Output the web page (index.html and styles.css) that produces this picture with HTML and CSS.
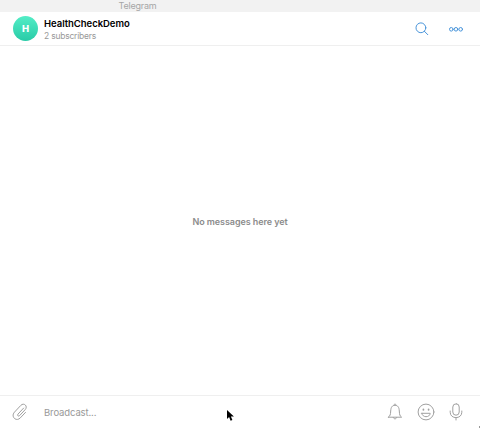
FILE: index.html
```html
<!DOCTYPE html>
<html lang="en">
<head>
<meta charset="utf-8">
<title>Telegram</title>
<link rel="stylesheet" href="styles.css">
</head>
<body>
<div class="window">
  <div class="titlebar"><span>Telegram</span></div>
  <header class="header">
    <div class="avatar">H</div>
    <div class="info">
      <div class="name">HealthCheckDemo</div>
      <div class="subs">2 subscribers</div>
    </div>
    <svg class="search" width="14" height="14" viewBox="0 0 14 14"><circle cx="5.9" cy="5.8" r="4.9"/><path d="M9.4 9.3l3.4 3.4"/></svg>
    <svg class="more" width="14" height="6" viewBox="0 0 14 6"><circle cx="2.3" cy="3.3" r="1.8"/><circle cx="7" cy="3.3" r="1.8"/><circle cx="11.7" cy="3.3" r="1.8"/></svg>
  </header>
  <main class="chat"><p>No messages here yet</p></main>
  <footer class="composer">
    <svg class="clip" width="16" height="18" viewBox="0 0 16 18"><path d="M11.6 5.1L5.9 11.2c-1 1.1.5 2.6 1.6 1.5l5.7-6.1c3-3.3-1.2-7.5-4.4-4.2L2.5 9.1c-4.1 4.5 1.7 10.1 5.8 5.8l5.2-5.5"/></svg>
    <div class="input">Broadcast...</div>
    <svg class="bell" width="16" height="18" viewBox="0 0 16 18"><path d="M1.4 14.2h13.2c-1.8-1.3-2.1-2.5-2.3-6.2C12.1 4.1 10.7 2.3 8 2.3S3.9 4.1 3.7 8c-.2 3.7-.5 4.9-2.3 6.2zM7 2.2c-.4-1.6 2.4-1.6 2 0M6.3 14.5c.3 1.9 3.1 1.9 3.4 0"/></svg>
    <svg class="smile" width="18" height="18" viewBox="0 0 18 18"><circle cx="9" cy="9" r="7.9"/><path d="M4.8 10.3h8.4c-.4 4.6-8 4.6-8.4 0z"/><ellipse class="eye" cx="6.4" cy="6.7" rx=".9" ry="1.1"/><ellipse class="eye" cx="11.6" cy="6.7" rx=".9" ry="1.1"/></svg>
    <svg class="mic" width="14" height="18" viewBox="0 0 14 18"><rect x="3.8" y=".8" width="6.4" height="11.4" rx="3.2"/><path d="M1.2 8v1.3c0 7.1 11.6 7.1 11.6 0V8M7 14.7V17"/></svg>
  </footer>
  <svg class="cursor" width="9" height="13" viewBox="0 0 9 13"><path d="M1 1v9l2.1-1.9 1.5 3.6 1.8-.8-1.5-3.4h3z"/></svg>
  <i class="corner"></i>
</div>
</body>
</html>
```
FILE: styles.css
```css
* { box-sizing: border-box; }
body { margin: 0; font-family: Inter, "Liberation Sans", sans-serif; background: #fff; }
.window { position: relative; width: 480px; height: 428px; overflow: hidden; display: flex; flex-direction: column; }
.titlebar { height: 12px; background: #f2f2f2; color: #a6a6a6; font-size: 9px; line-height: 11px; padding-left: 118.5px; flex: none; letter-spacing: -.2px; }
.header { height: 34px; flex: none; display: flex; align-items: center; padding: 0 17px 0 13px; border-bottom: 1px solid #efefef; }
.avatar { width: 25px; height: 25px; border-radius: 50%; background: linear-gradient(#53edc6, #29cba7); color: #fff; font-size: 9.5px; font-weight: 800; line-height: 25px; text-align: center; }
.info { margin-left: 6px; padding-top: 2px; flex: 1; }
.name { font-size: 9.5px; font-weight: 600; line-height: 12px; color: #000; letter-spacing: -.04px; }
.subs { font-size: 8.5px; line-height: 12px; color: #999; letter-spacing: -.22px; }
svg { display: block; fill: none; stroke: #a0a0a0; stroke-width: 1; flex: none; stroke-linecap: round; stroke-linejoin: round; }
.search { stroke: #4a95da; margin-right: 20px; }
.more { stroke: #4a95da; }
.chat { flex: 1; display: flex; align-items: center; justify-content: center; color: #8c8c8c; font-size: 9px; font-weight: 600; letter-spacing: -.08px; }
.chat p { margin: 1px 0 0; }
.composer { height: 33px; flex: none; display: flex; align-items: center; border-top: 1px solid #efefef; padding: 0 17px 0 12px; }
.input { flex: 1; margin-left: 16px; color: #999; font-size: 9.5px; letter-spacing: -.12px; }
.smile { margin: 0 14px 0 14px; }
.smile .eye { fill: #a0a0a0; stroke: none; }
.cursor { position: absolute; left: 226px; top: 409px; }
.cursor path { fill: #000; stroke: #fff; stroke-width: .8; paint-order: stroke; }
.corner { position: absolute; right: 0; bottom: 0; width: 1px; height: 2px; background: #999; }
```
